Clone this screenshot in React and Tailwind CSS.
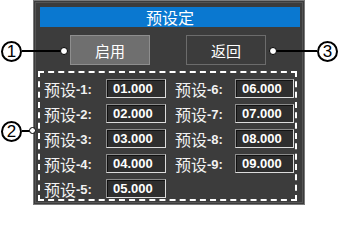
const presets = [
  ["1", "01.000"],
  ["6", "06.000"],
  ["2", "02.000"],
  ["7", "07.000"],
  ["3", "03.000"],
  ["8", "08.000"],
  ["4", "04.000"],
  ["9", "09.000"],
  ["5", "05.000"],
];

function PresetField({ num, value, labelWidth, boxWidth }) {
  return (
    <div className="flex items-center h-[19px]">
      <div
        className={`flex items-center text-[#f2f2f2] ${labelWidth}`}
      >
        <span className="text-[16px] leading-none font-['Noto_Sans_CJK_SC',sans-serif]">
          预设
        </span>
        <span className="text-[13px] font-bold leading-none mt-[2px] font-['Liberation_Sans',Arial,sans-serif]">
          -{num}:
        </span>
      </div>
      <div
        className={`h-[19px] ${boxWidth} flex items-center pl-[6px] bg-[#2e2e2e] border border-t-[#8c8c8c] border-l-[#8c8c8c] border-r-[#dcdcdc] border-b-[#dcdcdc] shadow-[inset_1px_1px_0_#111]`}
      >
        <span className="text-[13px] font-bold text-white leading-none font-['Liberation_Sans',Arial,sans-serif]">
          {value}
        </span>
      </div>
    </div>
  );
}

function Callout({ n, className }) {
  return (
    <div
      className={`absolute w-[21px] h-[21px] rounded-full border-2 border-black bg-white flex items-center justify-center text-[17px] leading-none text-black font-['Liberation_Sans',Arial,sans-serif] ${className}`}
    >
      {n}
    </div>
  );
}

export default function App() {
  return (
    <div className="relative w-[340px] h-[206px] bg-white overflow-hidden">
      <div className="ml-[33px] w-[272px] h-[205px] border border-[#7a7a7a] bg-[#3c3c3c] p-px">
        <div className="h-full border border-[#555555] flex flex-col pt-[4px]">
          <div className="mx-[4px] mr-[2px] h-[20px] bg-[#0a78d0] flex items-center justify-center text-white text-[16px] leading-none font-['Noto_Sans_CJK_SC',sans-serif]">
            预设定
          </div>

          <div className="mt-[8px] flex justify-center gap-[36px] pr-[2px]">
            <button className="w-[80px] h-[30px] bg-[#6f6f6f] border border-[#8e8e8e] text-white text-[15px] leading-none font-['Noto_Sans_CJK_SC',sans-serif]">
              启用
            </button>
            <button className="w-[80px] h-[30px] bg-[#3c3c3c] border border-[#6c6c6c] text-white text-[15px] leading-none font-['Noto_Sans_CJK_SC',sans-serif]">
              返回
            </button>
          </div>

          <div className="mt-[6px] ml-[2px] mr-[5px] h-[130px] border-2 border-dashed border-white pt-[6px] pl-[4px]">
            <div className="grid grid-cols-[122px_119px] gap-x-[9px] gap-y-[6px]">
              {presets.map(([num, value], i) => (
                <PresetField
                  key={num}
                  num={num}
                  value={value}
                  labelWidth={i % 2 === 0 ? "w-[62px]" : "w-[60px]"}
                  boxWidth={i % 2 === 0 ? "w-[60px]" : "w-[59px]"}
                />
              ))}
            </div>
          </div>
        </div>
      </div>

      {/* callout 1 */}
      <Callout n="1" className="left-[1px] top-[41px]" />
      <div className="absolute left-[22px] top-[50px] w-[40px] h-[2px] bg-black" />
      <div className="absolute left-[60px] top-[47px] w-[8px] h-[8px] rounded-full bg-white border border-black" />

      {/* callout 2 */}
      <Callout n="2" className="left-[1px] top-[121px]" />
      <div className="absolute left-[22px] top-[130px] w-[8px] h-[2px] bg-black" />
      <div className="absolute left-[29px] top-[127px] w-[7px] h-[7px] rounded-full bg-white border border-black" />

      {/* callout 3 */}
      <div className="absolute left-[276px] top-[50px] w-[41px] h-[2px] bg-black" />
      <div className="absolute left-[269px] top-[47px] w-[8px] h-[8px] rounded-full bg-white border border-black" />
      <Callout n="3" className="left-[317px] top-[41px]" />
    </div>
  );
}
